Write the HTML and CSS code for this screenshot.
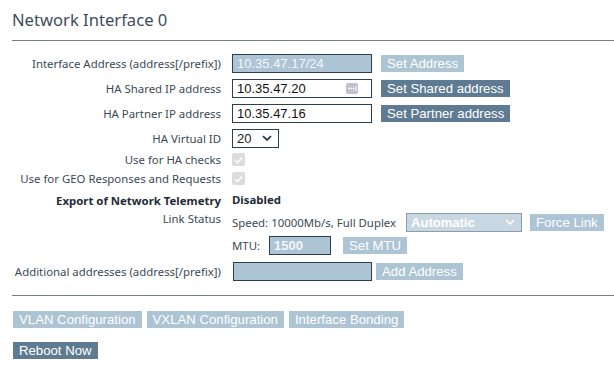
FILE: index.html
```html
<!DOCTYPE html>
<html>
<head>
<meta charset="utf-8">
<link rel="stylesheet" href="styles.css">
</head>
<body>
<div class="page">
  <h1 class="title">Network Interface 0</h1>
  <div class="form">
    <div class="row r25">
      <div class="label">Interface Address (address[/prefix])</div>
      <div class="value">
        <input class="field field-disabled" value="10.35.47.17/24" readonly>
        <button class="btn btn-light ml9">Set Address</button>
      </div>
    </div>
    <div class="row r25">
      <div class="label">HA Shared IP address</div>
      <div class="value">
        <span class="field-wrap">
          <input class="field" value="10.35.47.20">
          <span class="autofill"><svg width="12" height="11" viewBox="0 0 12 11"><rect x="0" y="0" width="12" height="11" rx="2" fill="#bcc3ca"/><circle cx="3" cy="5.5" r="0.9" fill="#fff"/><circle cx="5.3" cy="5.5" r="0.9" fill="#fff"/><circle cx="7.6" cy="5.5" r="0.9" fill="#fff"/><rect x="9.4" y="3" width="1" height="5" fill="#fff"/></svg></span>
        </span>
        <button class="btn btn-dark ml9">Set Shared address</button>
      </div>
    </div>
    <div class="row r25">
      <div class="label">HA Partner IP address</div>
      <div class="value">
        <input class="field" value="10.35.47.16">
        <button class="btn btn-dark ml9">Set Partner address</button>
      </div>
    </div>
    <div class="row r25">
      <div class="label">HA Virtual ID</div>
      <div class="value">
        <span class="select select-small"><span>20</span><svg width="10" height="7" viewBox="0 0 10 7"><path d="M1 1.2 L5 5 L9 1.2" fill="none" stroke="#2c3e50" stroke-width="1.8"/></svg></span>
      </div>
    </div>
    <div class="row r17">
      <div class="label">Use for HA checks</div>
      <div class="value"><span class="check"><svg width="9" height="8" viewBox="0 0 9 8"><path d="M1 4 L3.5 6.5 L8 1.5" fill="none" stroke="#fff" stroke-width="1.6"/></svg></span></div>
    </div>
    <div class="row r21">
      <div class="label">Use for GEO Responses and Requests</div>
      <div class="value"><span class="check"><svg width="9" height="8" viewBox="0 0 9 8"><path d="M1 4 L3.5 6.5 L8 1.5" fill="none" stroke="#fff" stroke-width="1.6"/></svg></span></div>
    </div>
    <div class="row r22">
      <div class="label bold">Export of Network Telemetry</div>
      <div class="value bold text">Disabled</div>
    </div>
    <div class="row r23 top">
      <div class="label">Link Status</div>
      <div class="value">
        <span class="text">Speed: 10000Mb/s, Full Duplex</span>
        <span class="select select-wide ml10"><span>Automatic</span><svg width="10" height="7" viewBox="0 0 10 7"><path d="M1 1.2 L5 5 L9 1.2" fill="none" stroke="#fff" stroke-width="1.6"/></svg></span>
        <button class="btn btn-light ml8">Force Link</button>
      </div>
    </div>
    <div class="row r23">
      <div class="label"></div>
      <div class="value">
        <span class="text">MTU:</span>
        <input class="field field-disabled field-mtu" value="1500" readonly>
        <button class="btn btn-light ml12">Set MTU</button>
      </div>
    </div>
    <div class="row r28">
      <div class="label">Additional addresses (address[/prefix])</div>
      <div class="value">
        <input class="field field-disabled field-add" value="" readonly>
        <button class="btn btn-light ml4">Add Address</button>
      </div>
    </div>
  </div>
  <div class="divider"></div>
  <div class="actions">
    <button class="btn btn-light">VLAN Configuration</button>
    <button class="btn btn-light">VXLAN Configuration</button>
    <button class="btn btn-light">Interface Bonding</button>
  </div>
  <div class="actions2">
    <button class="btn btn-dark">Reboot Now</button>
  </div>
</div>
</body>
</html>
```

FILE: styles.css
```css
* { box-sizing: border-box; }
html, body { margin: 0; padding: 0; background: #fff; }
body {
  font-family: "Noto Sans", "Open Sans", sans-serif;
  font-size: 11.4px;
  color: #3b4956;
}
.page { padding-left: 12px; }
.title {
  margin: 0;
  height: 41px;
  padding-top: 9px;
  font-size: 16.6px;
  font-weight: normal;
  color: #3d4d5b;
  border-bottom: 1px solid #6a8296;
  line-height: 21px;
}
.form { margin-top: 10px; }
.row { display: flex; align-items: center; }
.row.top { align-items: flex-start; }
.r25 { height: 25px; }
.r17 { height: 17px; }
.r21 { height: 21px; }
.r22 { height: 22px; }
.r23 { height: 23px; }
.r28 { height: 28px; }
.label {
  width: 209px;
  text-align: right;
  white-space: nowrap;
  flex: none;
}
.bold { font-weight: bold; color: #222c35; }
.value {
  margin-left: 11px;
  display: flex;
  align-items: center;
  white-space: nowrap;
}
.row.top .value { margin-top: 2px; }
.text { line-height: 14px; }
.field {
  width: 140px;
  height: 19px;
  border: 1px solid #2c3f50;
  border-radius: 0;
  padding: 0 4px;
  margin: 0;
  font-family: "Liberation Sans", Arial, sans-serif;
  font-size: 13px;
  color: #111;
  background: #fff;
  outline: none;
}
.field-disabled {
  background: #adc4d4;
  color: #f2f6f9;
}
.field-mtu { width: 62px; margin-left: 9px; font-weight: bold; }
.field-add { width: 139px; margin-left: 1px; }
.field-wrap { position: relative; display: inline-block; height: 19px; }
.autofill { position: absolute; left: 114px; top: 4px; line-height: 0; }
.btn {
  font-family: "Liberation Sans", Arial, sans-serif;
  font-size: 13.2px;
  height: 17px;
  line-height: 17px;
  padding: 0 6px;
  border: 0;
  margin: 0;
  color: #fff;
  cursor: pointer;
}
.btn-light { background: #adc4d4; }
.btn-dark { background: #5e7b91; }
.ml4 { margin-left: 4px; }
.ml8 { margin-left: 8px; }
.ml9 { margin-left: 9px; }
.ml10 { margin-left: 10px; }
.ml12 { margin-left: 12px; }
.select {
  display: inline-flex;
  align-items: center;
  justify-content: space-between;
  height: 19px;
  font-family: "Liberation Sans", Arial, sans-serif;
  font-size: 13px;
  padding: 0 6px 0 4px;
}
.select-small {
  width: 47px;
  border: 1px solid #2c3f50;
  background: #fff;
  color: #222;
}
.select-wide {
  width: 116px;
  border: 1px solid #8b9cab;
  background: #c8d7e2;
  color: #fff;
  font-weight: bold;
}
.check {
  width: 13px;
  height: 13px;
  border-radius: 2px;
  background: #dcdcdc;
  display: inline-flex;
  align-items: center;
  justify-content: center;
}
.divider {
  margin-top: 10px;
  border-top: 1px solid #6a8296;
  height: 0;
}
.actions {
  margin-top: 15px;
  display: flex;
  gap: 5px;
  padding-left: 1px;
}
.actions2 { margin-top: 14px; padding-left: 1px; }
```
